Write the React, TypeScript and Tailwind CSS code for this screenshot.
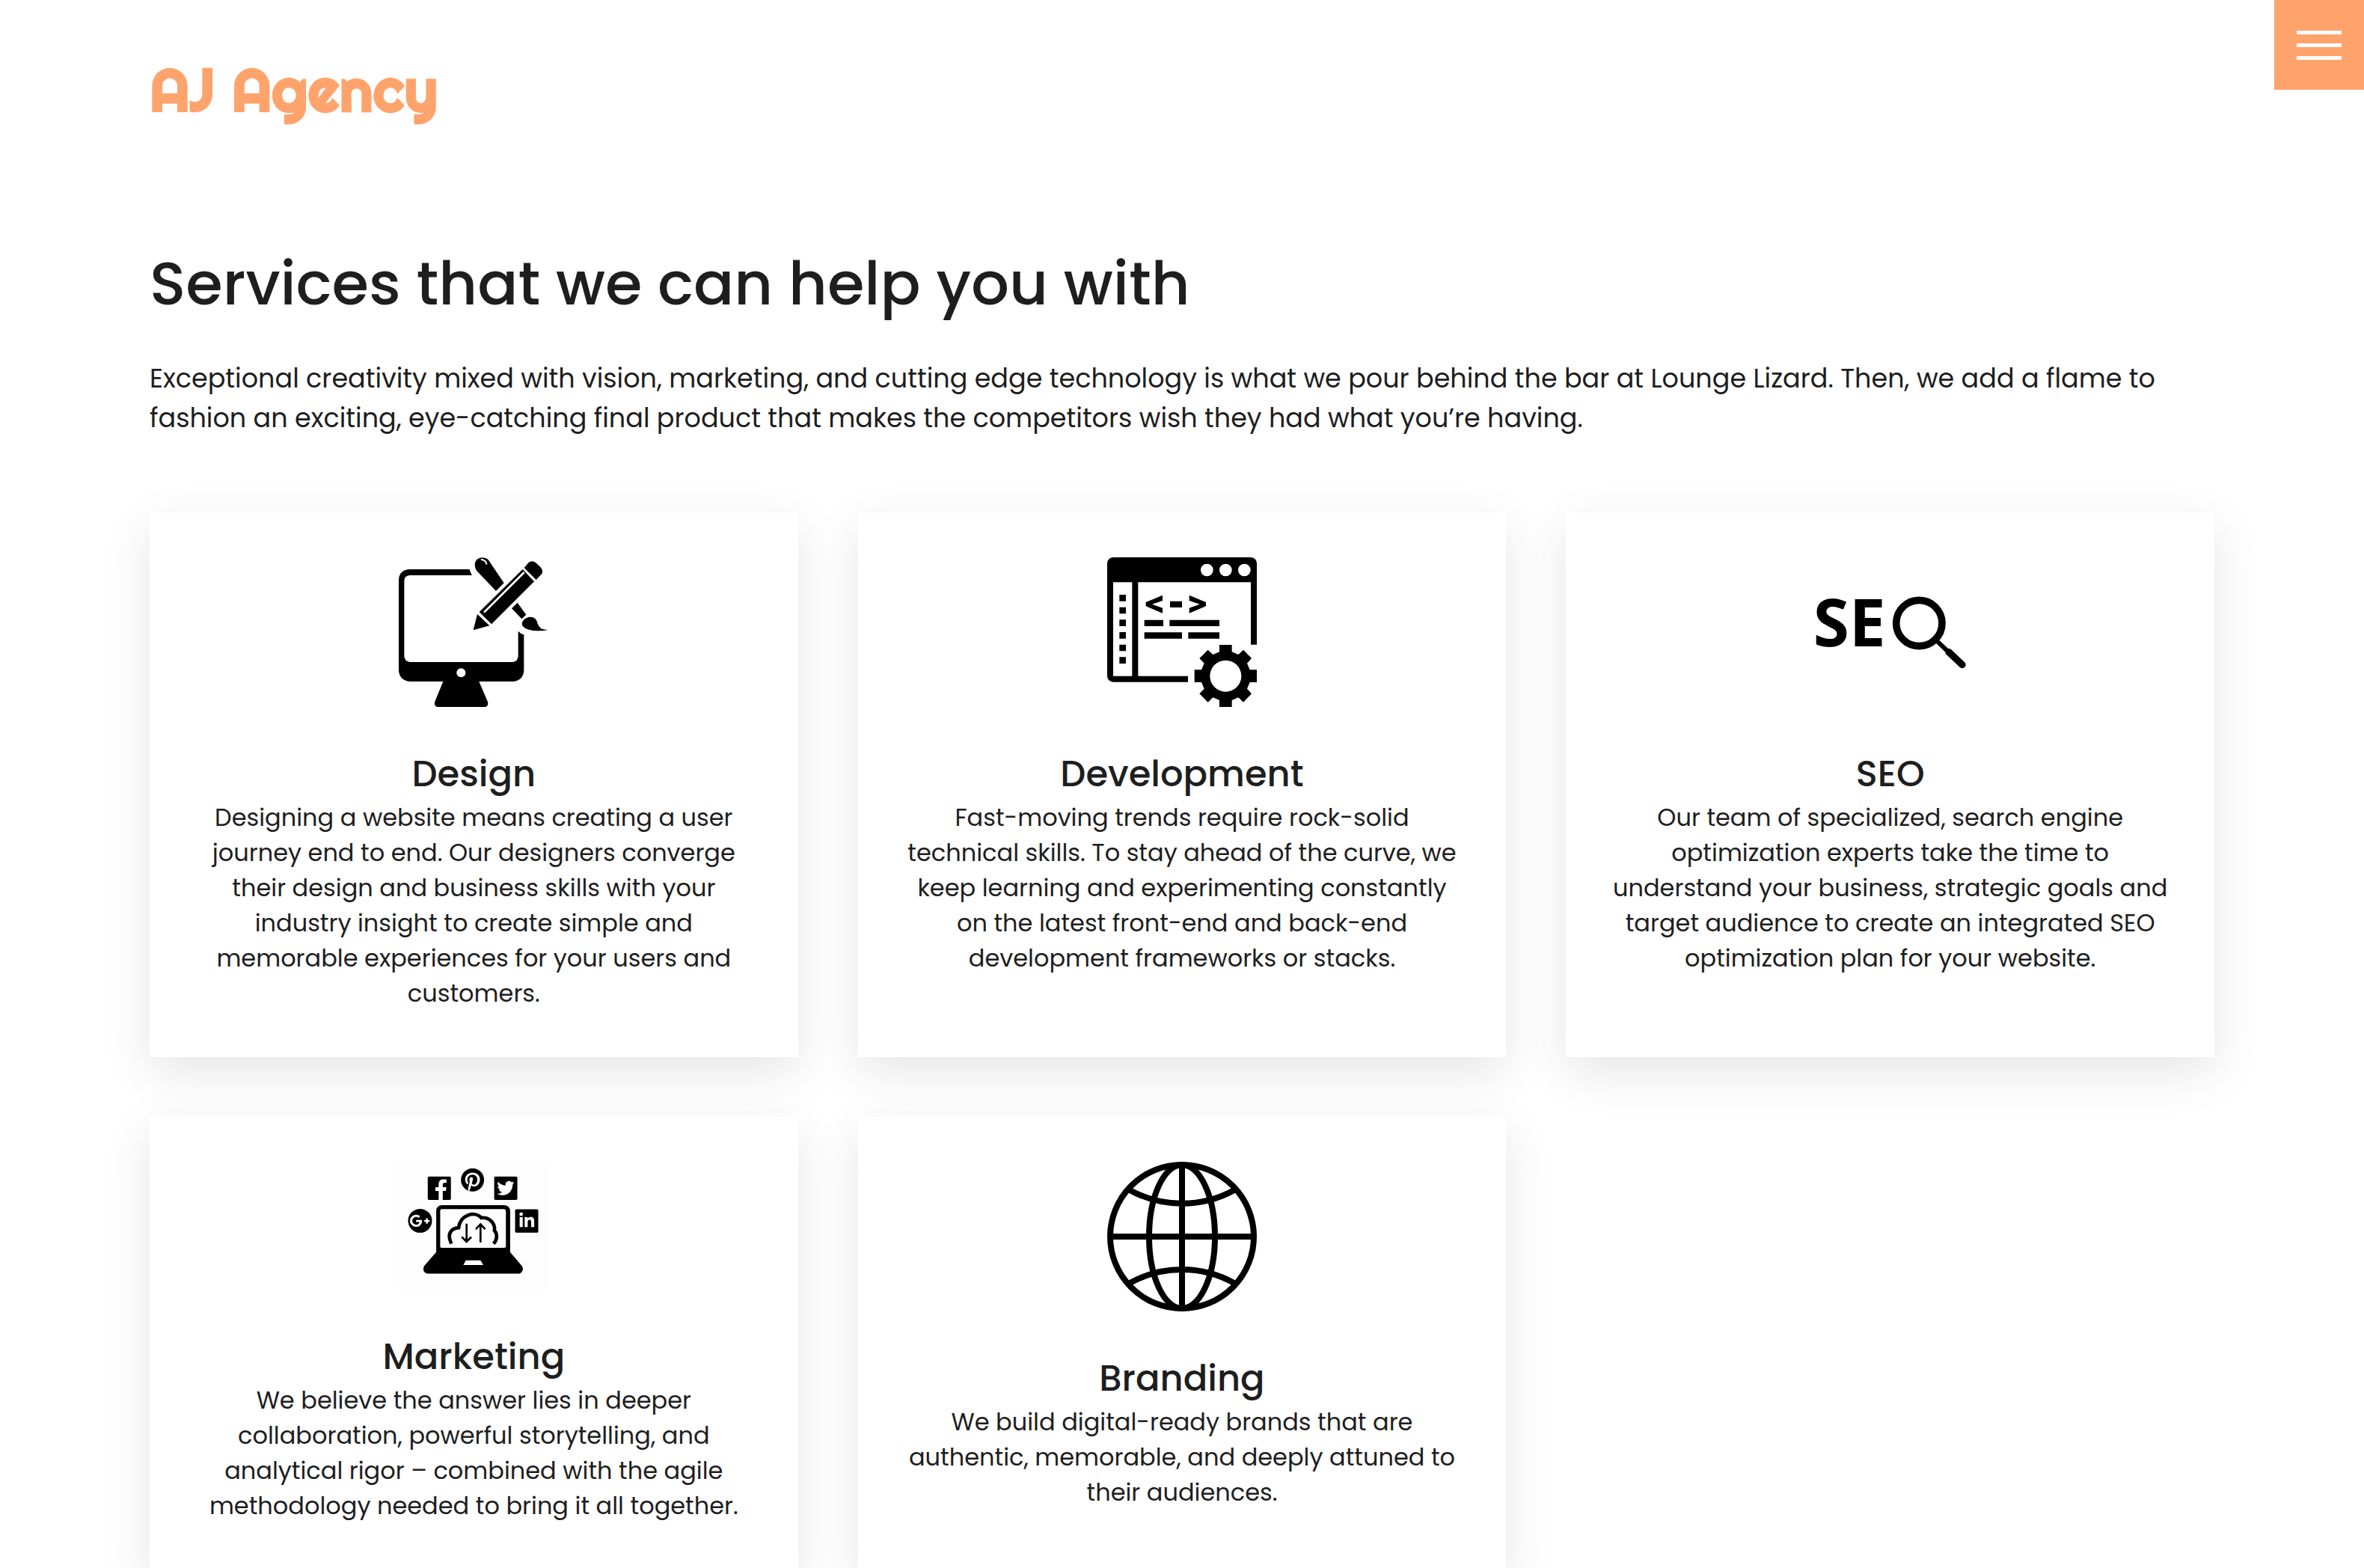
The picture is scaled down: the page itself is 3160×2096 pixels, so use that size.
import React from 'react';
import { FaFacebookF, FaGooglePlusG, FaLinkedinIn, FaPinterest, FaTwitter } from 'react-icons/fa';

function DesignIcon() {
  return (
    <svg viewBox="100 75 600 600" className="w-[200px] h-[200px]" aria-hidden="true">
      <path d="M384 123H144Q100 125 100 168V530Q104 568 144 573H278L245 653Q240 674 256 675H446Q461 673 457 655L422 573H560Q598 568 602 530V385Q589 382 579 371V472Q577 494 556 495H146Q124 494 122 472V168Q123 149 144 147H394Q387 136 384 123Z" />
      <circle cx="350" cy="538" r="18" fill="#fff" />
      <path d="M490 210L412 128Q398 104 412 85Q432 68 456 82Q464 90 470 101L522 178Z" />
      <path d="M432 84Q448 86 452 101" fill="none" stroke="#fff" strokeWidth="6" strokeLinecap="round" />
      <path d="M576 257L611 305L593 322L553 280Z" />
      <path d="M594 341Q597 322 620 315Q644 312 654 331Q659 354 674 362L698 367Q650 374 622 365Q594 357 594 341Z" />
      <path d="M603 117L621 96Q635 86 649 96L669 115Q680 127 674 141L651 165Z" />
      <path d="M597 123L643 172L472 343L423 294Z" />
      <path d="M603 135L442 296" stroke="#fff" strokeWidth="8" fill="none" />
      <path d="M415 303L464 349L399 367Z" />
    </svg>
  );
}

function DevelopmentIcon() {
  return (
    <svg viewBox="90 75 600 600" className="w-[200px] h-[200px]" aria-hidden="true">
      <path
        fillRule="evenodd"
        d="M114 75H666Q688 77 690 99V425H666V175H214V551H414V575H114Q92 573 90 551V99Q92 77 114 75ZM114 175V551H190V175Z"
      />
      <g fill="#fff">
        <circle cx="490" cy="126" r="25" />
        <circle cx="565" cy="126" r="25" />
        <circle cx="640" cy="126" r="25" />
      </g>
      <path d="M139 225h26v26h-26zM139 275h26v26h-26zM139 325h26v26h-26zM139 375h26v26h-26zM139 425h26v26h-26zM139 475h26v26h-26z" />
      <path d="M312 227V249L270 263L312 278V299L245 271V255ZM419 227V249L461 263L419 278V299L486 271V255ZM342 251h48v25h-48z" />
      <path d="M239 326h76v25h-76zM340 326h200v25h-200zM239 376h151v25h-151zM415 376h125v25h-125z" />
      <path
        fillRule="evenodd"
        d="M540 426H590V454L616 465L636 446L669 480L651 500L662 526H690V576H662L651 602L669 622L636 656L616 637L590 648V676H540V648L514 637L494 656L460 622L479 602L468 576H440V526H468L479 500L460 480L494 446L514 465L540 454ZM565 488A63 63 0 1 0 565 614A63 63 0 1 0 565 488Z"
      />
    </svg>
  );
}

function SeoIcon() {
  return (
    <svg viewBox="80 -45 600 600" className="w-[200px] h-[200px] overflow-visible" aria-hidden="true">
      <text x="70" y="312" className="font-['Open_Sans',sans-serif] font-bold text-[262px]">
        SE
      </text>
      <circle cx="495" cy="219" r="92" fill="none" stroke="#000" strokeWidth="29" />
      <path d="M566 290L620 342" stroke="#000" strokeWidth="18" />
      <path d="M614 335L668 386" stroke="#000" strokeWidth="28" strokeLinecap="round" />
    </svg>
  );
}

function MarketingIcon() {
  return (
    <svg viewBox="40 69 600 514" className="w-[200px] h-[171px] bg-[#fdfdfd]" aria-hidden="true">
      <rect x="156" y="128" width="93" height="94" rx="5" />
      <FaFacebookF x={167} y={139} size={84} color="#fff" />
      <FaPinterest x={288} y={94} size={96} color="#000" />
      <rect x="423" y="128" width="93" height="94" rx="5" />
      <FaTwitter x={434} y={140} size={70} color="#fff" />
      <circle cx="125" cy="306" r="48" />
      <FaGooglePlusG x={83} y={265} size={82} color="#fff" />
      <rect x="507" y="260" width="93" height="94" rx="5" />
      <FaLinkedinIn x={520} y={272} size={68} color="#fff" />
      <path
        fillRule="evenodd"
        d="M212 243H464Q486 245 487 266V432L535 488Q545 508 525 518H153Q132 512 141 488L190 432V266Q191 245 212 243ZM212 259Q206 260 206 266V410Q207 415 213 415H464Q470 414 470 409V266Q469 260 463 259ZM309 465L299 484H379L368 465Z"
      />
      <path
        d="M251 398C232 360 248 337 280 334C286 282 345 265 371 294C404 290 428 318 424 345C438 361 434 384 420 398"
        fill="none"
        stroke="#000"
        strokeWidth="14"
      />
      <path d="M312 318V390M293 371L312 390L331 371M368 393V320M349 340L368 320L387 340" fill="none" stroke="#000" strokeWidth="8" />
    </svg>
  );
}

function BrandingIcon() {
  return (
    <svg viewBox="90 68 600 600" className="w-[200px] h-[200px]" fill="none" stroke="#000" strokeWidth="24" aria-hidden="true">
      <circle cx="390" cy="368" r="288" />
      <ellipse cx="390" cy="368" rx="132" ry="288" />
      <path d="M390 80V656M102 368H678M180 181Q277 235 390 235Q503 235 600 181M180 555Q277 500 390 500Q503 500 600 555" />
    </svg>
  );
}

type Service = { title: string; icon: React.ReactNode; lines: string[] };

const services: Service[] = [
  {
    title: 'Design',
    icon: <DesignIcon />,
    lines: [
      'Designing a website means creating a user',
      'journey end to end. Our designers converge',
      'their design and business skills with your',
      'industry insight to create simple and',
      'memorable experiences for your users and',
      'customers.',
    ],
  },
  {
    title: 'Development',
    icon: <DevelopmentIcon />,
    lines: [
      'Fast-moving trends require rock-solid',
      'technical skills. To stay ahead of the curve, we',
      'keep learning and experimenting constantly',
      'on the latest front-end and back-end',
      'development frameworks or stacks.',
    ],
  },
  {
    title: 'SEO',
    icon: <SeoIcon />,
    lines: [
      'Our team of specialized, search engine',
      'optimization experts take the time to',
      'understand your business, strategic goals and',
      'target audience to create an integrated SEO',
      'optimization plan for your website.',
    ],
  },
  {
    title: 'Marketing',
    icon: <MarketingIcon />,
    lines: [
      'We believe the answer lies in deeper',
      'collaboration, powerful storytelling, and',
      'analytical rigor – combined with the agile',
      'methodology needed to bring it all together.',
    ],
  },
  {
    title: 'Branding',
    icon: <BrandingIcon />,
    lines: ['We build digital-ready brands that are', 'authentic, memorable, and deeply attuned to', 'their audiences.'],
  },
];

function Lines({ lines }: { lines: string[] }) {
  return (
    <>
      {lines.map((line, i) => (
        <React.Fragment key={line}>
          {i > 0 && <br />}
          {line}
        </React.Fragment>
      ))}
    </>
  );
}

function ServiceCard({ title, icon, lines }: Service) {
  return (
    <article className="flex flex-col items-center bg-white px-[60px] pt-[60px] pb-[62px] text-center shadow-[0_20px_60px_rgba(0,0,0,0.1)]">
      {icon}
      <h2 className="mt-[56px] text-[48px] leading-[68px] font-medium">{title}</h2>
      <p className="text-[32px] leading-[47px] whitespace-nowrap">
        <Lines lines={lines} />
      </p>
    </article>
  );
}

export default function App() {
  return (
    <div className="h-screen overflow-hidden bg-white font-[Poppins,Inter,sans-serif] text-[#1e1e1e]">
      <button
        type="button"
        aria-label="Open menu"
        className="fixed top-0 right-0 flex h-[120px] w-[120px] flex-col items-center justify-center gap-[12px] bg-[#ffa36c]"
      >
        <span className="h-[5px] w-[60px] bg-white" />
        <span className="h-[5px] w-[60px] bg-white" />
        <span className="h-[5px] w-[60px] bg-white" />
      </button>
      <header className="px-[200px] pt-[70px]">
        <a href="#" className="inline-block font-[Righteous,Inter,sans-serif] text-[80px] leading-[100px] font-bold text-[#ffa36c]">
          AJ Agency
        </a>
      </header>
      <main className="px-[200px] pt-[149px]">
        <h1 className="text-[80px] leading-[120px] font-medium">Services that we can help you with</h1>
        <p className="mt-[40px] text-[35px] leading-[53px]">
          Exceptional creativity mixed with vision, marketing, and cutting edge technology is what we pour behind the bar at
          Lounge Lizard. Then, we add a flame to fashion an exciting, eye-catching final product that makes the competitors
          wish they had what you’re having.
        </p>
        <section className="mt-[100px] grid grid-cols-3 gap-[80px]">
          {services.map((service) => (
            <ServiceCard key={service.title} {...service} />
          ))}
        </section>
      </main>
    </div>
  );
}
